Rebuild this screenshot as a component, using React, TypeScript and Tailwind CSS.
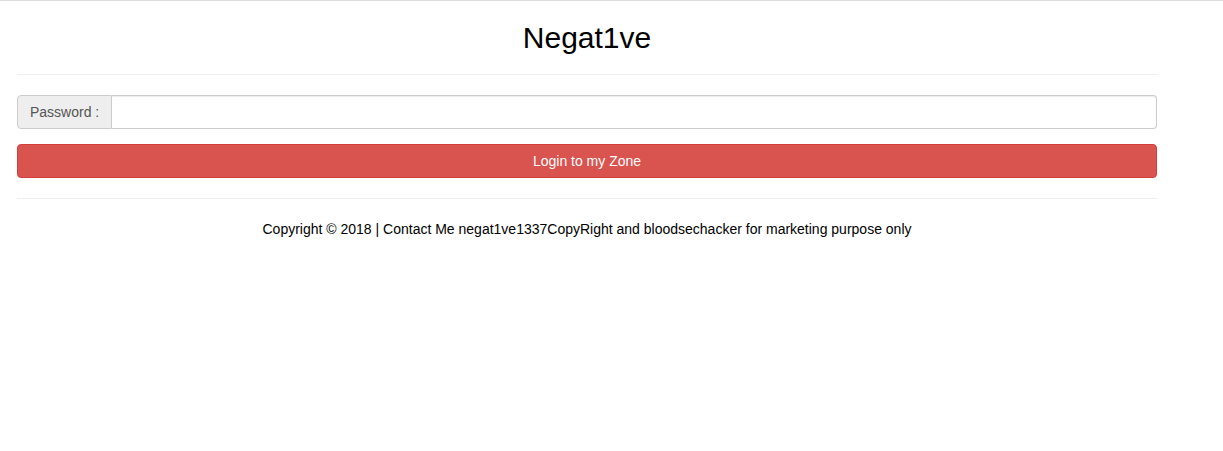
export default function App() {
  return (
    <div className="min-h-[451px] bg-white border-t border-[#dddddd] font-['Liberation_Sans',Arial,sans-serif] text-[14px] leading-[20px] text-[#333]">
      <div className="ml-[17px] w-[1140px]">
        <h2 className="mt-[20px] text-center text-[30px] leading-[33px] text-black">Negat1ve</h2>
        <hr className="mt-[20px] mb-[20px] border-t border-[#eeeeee]" />
        <form className="flex flex-col gap-[15px]" onSubmit={(e) => e.preventDefault()}>
          <div className="flex h-[34px]">
            <span className="flex items-center px-[12px] bg-[#eeeeee] border border-[#cccccc] rounded-l-[4px] text-[#555555]">
              Password :
            </span>
            <input
              type="password"
              className="flex-1 border border-l-0 border-[#cccccc] rounded-r-[4px] px-[12px] text-[#555] outline-none shadow-[inset_0_1px_1px_rgba(0,0,0,0.075)]"
            />
          </div>
          <button
            type="submit"
            className="h-[34px] w-full bg-[#d9534f] border border-[#d43f3a] rounded-[4px] text-white"
          >
            Login to my Zone
          </button>
        </form>
        <hr className="mt-[20px] mb-[20px] border-t border-[#eeeeee]" />
        <p className="text-center text-black">
          Copyright © 2018 | Contact Me negat1ve1337CopyRight and bloodsechacker for marketing purpose only
        </p>
      </div>
    </div>
  );
}
